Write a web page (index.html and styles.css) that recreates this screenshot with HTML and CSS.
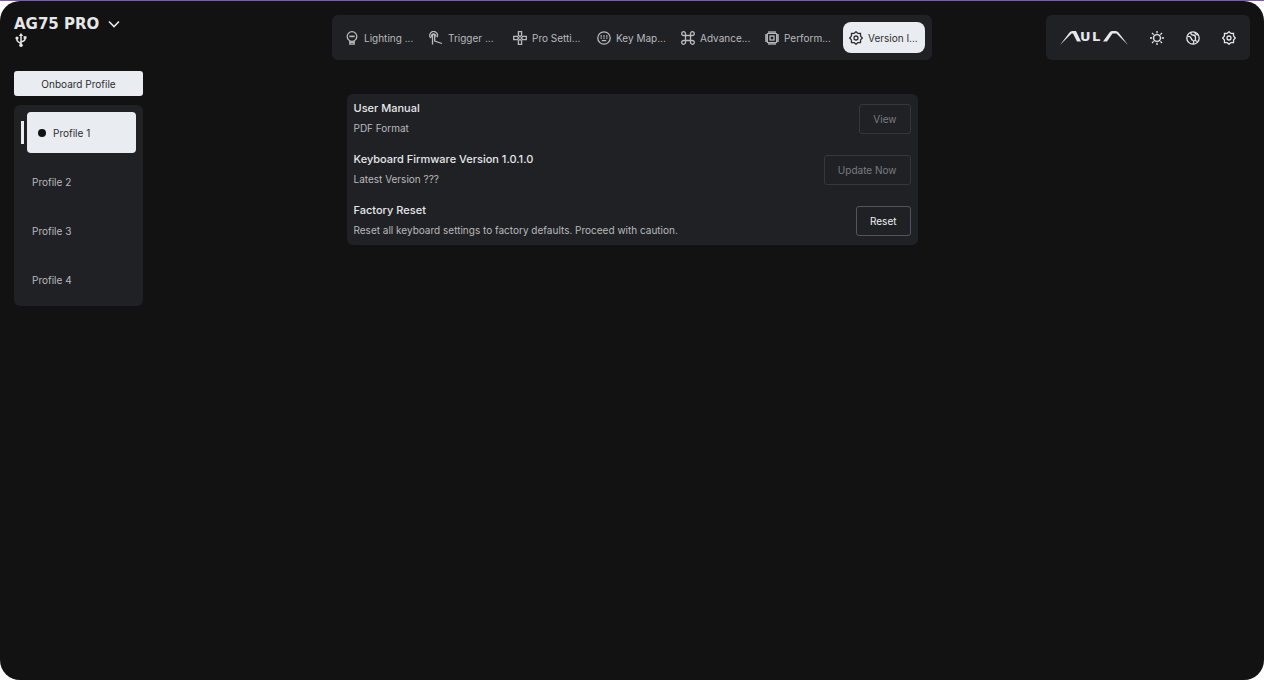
FILE: index.html
```html
<!DOCTYPE html>
<html lang="en">
<head>
<meta charset="UTF-8">
<meta name="viewport" content="width=device-width, initial-scale=1.0">
<title>AG75 PRO</title>
<link rel="stylesheet" href="styles.css">
</head>
<body>
<div class="app">
    <header class="topbar">
        <div class="device">
            <button class="device-name" type="button">AG75 PRO
                <svg width="12" height="8" viewBox="0 0 12 8"><path d="M1 1.500 6 6.500l5-5" stroke-width="1.600"/></svg>
            </button>
            <svg class="usb" width="14" height="14" viewBox="0 0 14 14">
                <path d="M7 2v10M3 5v2Q3 8.500 7 10.500M11 4.500v1.500Q11 8 7 9" stroke-width="1.500"/>
                <path class="fill" d="M7 0l2.200 3H4.800z"/>
                <circle class="fill" cx="7" cy="12.200" r="1.800"/>
                <circle class="fill" cx="3" cy="5" r="1.600"/>
                <path class="fill" d="M9.600 3.200h2.900v2.600H9.600z"/>
            </svg>
        </div>

        <nav class="nav">
            <a class="nav-item" href="#lighting">
                <svg width="14" height="14" viewBox="0 0 14 14"><circle cx="7" cy="5.500" r="4.800"/><path d="M4.800 9.800v3.300h4.400V9.800M5 11.400h4M4.500 5.500h5M5 4.500v1.500M7 4.500v1.500M9 4.500v1.500"/></svg>
                <span>Lighting ...</span>
            </a>
            <a class="nav-item" href="#trigger">
                <svg width="14" height="14" viewBox="0 0 14 14"><path d="M1.900 7A3.800 3.800 0 1 1 8 6.200M3.500 13.500v-9a1.100 1.100 0 0 1 2.200 0V10l7.300 2.500M3 6a2 2 0 1 1 3.500-.5"/></svg>
                <span>Trigger ...</span>
            </a>
            <a class="nav-item" href="#pro">
                <svg width="14" height="14" viewBox="0 0 14 14"><path d="M5.400.7h3.200v3.600L7 5.700 5.400 4.300zM5.400 13.300h3.200V9.700L7 8.300 5.400 9.700zM.7 5.400v3.200h3.600L5.700 7 4.300 5.400zM13.300 5.400v3.200H9.700L8.300 7l1.400-1.600z"/></svg>
                <span>Pro Setti...</span>
            </a>
            <a class="nav-item" href="#keymap">
                <svg width="14" height="14" viewBox="0 0 14 14"><circle cx="7" cy="7" r="6.200"/><path d="M3.500 5h7M3.500 7.200h7" stroke-dasharray="1.400 1.400"/><path d="M4.800 9.600h4.400"/></svg>
                <span>Key Map...</span>
            </a>
            <a class="nav-item" href="#advanced">
                <svg width="14" height="14" viewBox="0 0 14 14"><path d="M4.500 4.500h5v5h-5zM4.500 4.500V2.700a1.900 1.900 0 1 0-1.900 1.800zM9.500 4.500V2.700a1.900 1.900 0 1 1 1.900 1.800zM4.500 9.500v1.800a1.900 1.900 0 1 1-1.900-1.800zM9.500 9.500v1.800a1.900 1.900 0 1 0 1.900-1.800z"/></svg>
                <span>Advance...</span>
            </a>
            <a class="nav-item" href="#performance">
                <svg width="14" height="14" viewBox="0 0 14 14"><rect x="2.300" y="2.300" width="9.400" height="9.400" rx="1"/><rect x="5" y="5" width="4" height="4"/><path d="M4 0v2M6 0v2M8 0v2M10 0v2M4 12v2M6 12v2M8 12v2M10 12v2M0 4h2M0 6h2M0 8h2M0 10h2M12 4h2M12 6h2M12 8h2M12 10h2"/></svg>
                <span>Perform...</span>
            </a>
            <a class="nav-item active" href="#version">
                <svg width="14" height="14" viewBox="0 0 14 14"><path d="M7 .7l1.900 1.700 2.600.1.100 2.600L13.300 7l-1.700 1.900-.1 2.600-2.600.1L7 13.300l-1.900-1.700-2.600-.1-.1-2.600L.7 7l1.700-1.900.1-2.600 2.600-.1z"/><circle cx="7" cy="7" r="2"/></svg>
                <span>Version I...</span>
            </a>
        </nav>

        <div class="tools">
            <svg class="brand" width="68" height="22" viewBox="0 -4 68 22" role="img" aria-label="AULA">
                <path class="fill" d="M0 14 9.500 1.500Q10.500 0 12.500 0H16l5 10.500h-4L13 2.500h-1.500zM68 14 58.500 1.500Q57.500 0 55.500 0H52q-1.500 0-2.500 1.500L43 10.500h4l5.500-8h4z"/>
                <text x="20 32" y="10">UL</text>
            </svg>
            <button class="icon-btn" type="button" aria-label="Theme">
                <svg width="14" height="14" viewBox="0 0 14 14"><circle cx="7" cy="7" r="3.400"/><path d="M7 0v2.200M7 11.800V14M0 7h2.200M11.800 7H14M2 2l1.600 1.600M10.400 10.400 12 12M2 12l1.600-1.600M10.400 3.600 12 2"/></svg>
            </button>
            <button class="icon-btn" type="button" aria-label="Language">
                <svg width="14" height="14" viewBox="0 0 14 14"><circle cx="7" cy="7" r="6.200"/><path d="M1.500 5.500Q4.500 5 5 7t2 2.500T7 13M5 1.300Q4.500 4 7 4t2.500 2.500T9 9.500l2.500 1M9 1.300q0 2 3 2.700"/></svg>
            </button>
            <button class="icon-btn" type="button" aria-label="Settings">
                <svg width="14" height="14" viewBox="0 0 14 14"><path d="M7 .7l1.900 1.700 2.600.1.100 2.600L13.300 7l-1.700 1.900-.1 2.600-2.600.1L7 13.300l-1.900-1.700-2.600-.1-.1-2.600L.7 7l1.700-1.900.1-2.600 2.600-.1z"/><circle cx="7" cy="7" r="2"/></svg>
            </button>
        </div>
    </header>

    <div class="content">
        <aside class="sidebar">
            <button class="onboard" type="button">Onboard Profile</button>
            <div class="profiles">
                <button class="profile selected" type="button">Profile 1</button>
                <button class="profile" type="button">Profile 2</button>
                <button class="profile" type="button">Profile 3</button>
                <button class="profile" type="button">Profile 4</button>
            </div>
        </aside>

        <main class="panel">
            <section class="row">
                <div>
                    <h2>User Manual</h2>
                    <p>PDF Format</p>
                </div>
                <button class="btn" type="button" disabled>View</button>
            </section>
            <section class="row">
                <div>
                    <h2>Keyboard Firmware Version 1.0.1.0</h2>
                    <p>Latest Version ???</p>
                </div>
                <button class="btn" type="button" disabled>Update Now</button>
            </section>
            <section class="row">
                <div>
                    <h2>Factory Reset</h2>
                    <p>Reset all keyboard settings to factory defaults. Proceed with caution.</p>
                </div>
                <button class="btn" type="button">Reset</button>
            </section>
        </main>
    </div>
</div>
</body>
</html>
```
FILE: styles.css
```css
* {
    box-sizing: border-box;
}
body {
    margin: 0;
    background: #fff;
    border-top: 1px solid #76639a;
    font-family: Inter, "Liberation Sans", sans-serif;
    font-size: 10px;
    color: #b9babc;
}
button {
    font: inherit;
    color: inherit;
    background: none;
    border: none;
    padding: 0;
    cursor: pointer;
}
svg {
    flex: none;
    fill: none;
    stroke: currentColor;
    stroke-width: 1.3;
}
.fill {
    fill: currentColor;
    stroke: none;
}
.app {
    min-height: calc(100vh - 1px);
    padding: 14px;
    background: #121212;
    border-radius: 20px;
}

/* top bar */
.topbar {
    display: grid;
    grid-template-columns: 1fr auto 1fr;
    align-items: start;
}
.device {
    display: flex;
    flex-direction: column;
    align-items: flex-start;
    color: #e6e7e9;
}
.device-name {
    display: flex;
    align-items: center;
    gap: 9px;
    font: bold 15px/18px "DejaVu Sans", sans-serif;
}
.usb {
    width: 14px;
}
.nav {
    display: flex;
    gap: 2px;
    padding: 7px;
    background: #202125;
    border-radius: 6px;
}
.nav-item {
    display: flex;
    align-items: center;
    gap: 5px;
    width: 82px;
    height: 31px;
    padding-left: 6px;
    border-radius: 8px;
    color: #b9babc;
    text-decoration: none;
    white-space: nowrap;
}
.nav-item.active {
    background: #e9ecf1;
    color: #2c2d30;
}
.tools {
    justify-self: end;
    display: flex;
    align-items: center;
    gap: 22px;
    height: 45px;
    padding: 0 14px;
    background: #202125;
    border-radius: 6px;
    color: #e6e7e9;
}
.brand text {
    font: bold 13px "DejaVu Sans", sans-serif;
    fill: currentColor;
    stroke: none;
}
.icon-btn {
    display: flex;
}

/* content */
.content {
    display: grid;
    grid-template-columns: 1fr 571px 1fr;
    align-items: start;
    padding-top: 11px;
}
.sidebar {
    width: 129px;
}
.onboard {
    width: 100%;
    height: 25px;
    background: #e9ecf1;
    border-radius: 3px;
    color: #2c2d30;
}
.profiles {
    display: flex;
    flex-direction: column;
    gap: 8px;
    margin-top: 9px;
    padding: 7px 7px 6px;
    background: #202125;
    border-radius: 6px;
}
.profile {
    display: flex;
    align-items: center;
    height: 41px;
    padding-left: 11px;
}
.profile.selected {
    position: relative;
    gap: 7px;
    margin-left: 6px;
    background: #e9ecf1;
    border-radius: 4px;
    color: #2c2d30;
}
.profile.selected::before {
    content: "";
    width: 8px;
    height: 8px;
    border-radius: 50%;
    background: #121212;
}
.profile.selected::after {
    content: "";
    position: absolute;
    left: -6px;
    top: 9px;
    width: 3px;
    height: 23px;
    background: #e9ecf1;
}
.panel {
    margin-top: 23px;
    padding: 0 7px;
    background: #202125;
    border-radius: 6px;
}
.row {
    display: flex;
    align-items: center;
    justify-content: space-between;
    padding: 6px 0 8px;
}
.row:last-child {
    padding-bottom: 6px;
}
h2 {
    margin: 0 0 3px;
    font-size: 11px;
    line-height: 17px;
    font-weight: 500;
    color: #e6e7e9;
}
p {
    margin: 0;
    line-height: 17px;
}
.btn {
    height: 30px;
    padding: 0 13px;
    border: 1px solid #54555a;
    border-radius: 3px;
    color: #f0f1f3;
}
.btn:disabled {
    border-color: #36373b;
    color: #7b7c80;
    cursor: default;
}
```
